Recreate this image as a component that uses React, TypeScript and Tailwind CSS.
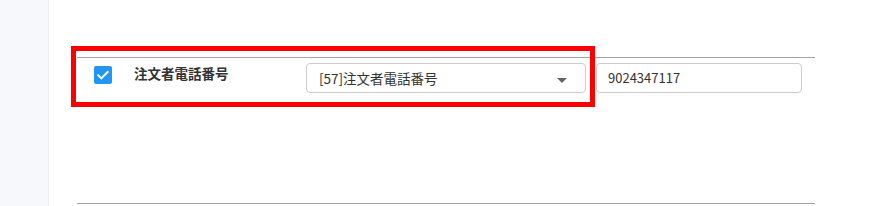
import React from 'react';

const font = { fontFamily: '"Noto Sans CJK JP", "Roboto", sans-serif' };

function Checkbox({ checked }: { checked: boolean }) {
  return (
    <span
      className={`mt-[3px] flex h-[18px] w-[18px] shrink-0 items-center justify-center rounded-[2px] ${
        checked ? 'bg-[#2196f3]' : 'border-2 border-[#757575] bg-white'
      }`}
    >
      {checked && (
        <svg viewBox="0 0 24 24" className="h-[16px] w-[16px]" fill="none" stroke="#fff" strokeWidth="3" strokeLinecap="square">
          <path d="M5 12.5l4.5 4.5L19 7.5" />
        </svg>
      )}
    </span>
  );
}

function MappingRow({ label, field, value }: { label: string; field: string; value: string }) {
  return (
    <div className="flex h-[146px] items-start border-t border-[#a3a3a3] pl-[17px] pt-[5px]">
      <Checkbox checked />
      <div className="ml-[22px] w-[172px] text-[13.5px] font-bold leading-[20px] text-[#333]">{label}</div>
      <div className="relative flex h-[30px] w-[280px] items-center rounded-[4px] border border-[#cccccc] bg-white pl-[12px] text-[13.5px] text-[#333]">
        {field}
        <span className="absolute right-[18px] top-[14px] h-0 w-0 border-x-[5px] border-t-[5px] border-x-transparent border-t-[#666]" />
      </div>
      <div className="ml-[10px] flex h-[30px] w-[206px] items-center rounded-[4px] border border-[#cccccc] bg-white pl-[11px] text-[13px] text-[#333]">
        {value}
      </div>
    </div>
  );
}

export default function App() {
  return (
    <div className="flex h-[206px] w-[871px] overflow-hidden bg-white" style={font}>
      <aside className="w-[49px] shrink-0 border-r border-[#eceef4] bg-[#f7f8fc]" />
      <main className="relative flex-1 pt-[57px]">
        <div className="ml-[28px] w-[738px]">
          <MappingRow label="注文者電話番号" field="[57]注文者電話番号" value="9024347117" />
          <div className="border-t border-[#a3a3a3]" />
        </div>
        <div className="pointer-events-none absolute left-[22px] top-[46px] h-[61px] w-[524px] border-[5px] border-[#ff0000]" />
      </main>
    </div>
  );
}
